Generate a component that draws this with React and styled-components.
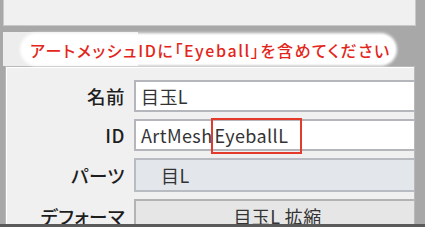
import styled, { createGlobalStyle } from "styled-components"

const Global = createGlobalStyle`
  html, body { margin: 0; padding: 0; }
  body {
    width: 425px;
    height: 227px;
    overflow: hidden;
    background: #a8a8a8;
    font-family: "Noto Sans CJK JP", "Noto Sans", sans-serif;
  }
`

const Frame = styled.div`
  position: relative;
  width: 425px;
  height: 227px;
  box-sizing: border-box;
  padding: 0 9px 0 3px;
  display: flex;
  flex-direction: column;
  border-bottom: 3px solid #5a5a5a;
  background: #a8a8a8;
`

const TopPanel = styled.div`
  height: 26px;
  box-sizing: border-box;
  background: #f0f0f0;
  border: 1px solid #c9c9c9;
  border-top: none;
`

const TabStrip = styled.div`
  margin-top: 6px;
  height: 34px;
  display: flex;
`

const Tab = styled.div`
  width: 135px;
  background: #ededed;
`

const Bubble = styled.div`
  position: absolute;
  left: 22px;
  top: 35px;
  height: 29px;
  padding: 0 4px 0 8px;
  display: flex;
  align-items: center;
  background: #fff;
  border-radius: 15px;
  box-shadow: 0 0 3px 2px #fff;
  color: #e3261b;
  font-size: 16px;
  font-weight: 500;
  font-feature-settings: "palt";
  letter-spacing: 1.6px;
  white-space: nowrap;
`

const Panel = styled.div`
  flex: 1;
  margin-left: 2px;
  margin-right: 1px;
  background: #f0f0f0;
  border: 1px solid #b9b9b9;
  border-bottom: none;
  box-shadow: inset 1px 1px 0 #fff;
  padding: 13px 0 0 0;
  display: flex;
  flex-direction: column;
  gap: 7px;
  overflow: hidden;
`

const Row = styled.div`
  display: flex;
  align-items: center;
  gap: 9px;
  height: ${p => p.h || 32}px;
  flex-shrink: 0;
`

const Label = styled.div`
  width: 119px;
  text-align: right;
  font-size: 18.5px;
  font-weight: 500;
  font-feature-settings: "palt";
  letter-spacing: 0.5px;
  color: #1e1e1e;
`

const Field = styled.div`
  flex: 1;
  height: 100%;
  box-sizing: border-box;
  display: flex;
  align-items: center;
  justify-content: ${p => (p.center ? "center" : "flex-start")};
  padding-left: ${p => p.indent || 5}px;
  font-size: 18px;
  letter-spacing: 0.4px;
  color: #333;
  background: ${p => p.bg || "#fff"};
  border: 2px solid ${p => p.line || "#b4b6bb"};
  border-right: none;
`

const Mark = styled.span`
  outline: 2px solid #e33a2c;
  padding: 2px 12px 4px 1px;
  margin-top: 2px;
  margin-left: 1px;
`

const App = () => {
  return (
    <>
      <Global />
      <Frame>
        <TopPanel />
        <TabStrip>
          <Tab />
        </TabStrip>
        <Bubble>アートメッシュIDに「Eyeball」を含めてください</Bubble>
        <Panel>
          <Row>
            <Label>名前</Label>
            <Field>目玉L</Field>
          </Row>
          <Row>
            <Label>ID</Label>
            <Field>
              ArtMesh<Mark>EyeballL</Mark>
            </Field>
          </Row>
          <Row h={34}>
            <Label>パーツ</Label>
            <Field bg="#e3e7ec" line="#b8bcc2" indent={25}>目L</Field>
          </Row>
          <Row h={34}>
            <Label>デフォーマ</Label>
            <Field bg="#e6e6e6" line="#b3b3b3" center>目玉L 拡縮</Field>
          </Row>
        </Panel>
      </Frame>
    </>
  )
}

export default App
